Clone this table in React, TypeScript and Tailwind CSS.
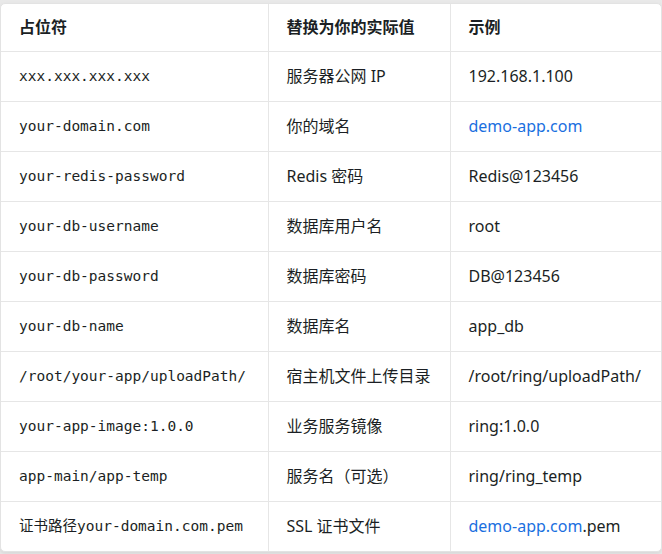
import React from "react";

type Row = {
  key: string;
  label: string;
  example: React.ReactNode;
};

const link = "text-[#1a6fe0]";

const rows: Row[] = [
  { key: "xxx.xxx.xxx.xxx", label: "服务器公网 IP", example: "192.168.1.100" },
  { key: "your-domain.com", label: "你的域名", example: <span className={link}>demo-app.com</span> },
  { key: "your-redis-password", label: "Redis 密码", example: "Redis@123456" },
  { key: "your-db-username", label: "数据库用户名", example: "root" },
  { key: "your-db-password", label: "数据库密码", example: "DB@123456" },
  { key: "your-db-name", label: "数据库名", example: "app_db" },
  { key: "/root/your-app/uploadPath/", label: "宿主机文件上传目录", example: "/root/ring/uploadPath/" },
  { key: "your-app-image:1.0.0", label: "业务服务镜像", example: "ring:1.0.0" },
  { key: "app-main/app-temp", label: "服务名（可选）", example: "ring/ring_temp" },
  {
    key: "证书路径your-domain.com.pem",
    label: "SSL 证书文件",
    example: (
      <>
        <span className={link}>demo-app.com</span>.pem
      </>
    ),
  },
];

const sans = "font-['Segoe_UI','Noto_Sans','Noto_Sans_CJK_SC',sans-serif]";
const mono = "font-['DejaVu_Sans_Mono','Noto_Sans_CJK_SC',monospace]";

export default function App() {
  return (
    <div className="min-h-screen bg-[#e9e9e9] pt-[3px] pb-[6px]">
      <div
        className={`w-[662px] overflow-hidden rounded-[5px] border border-[#e3e3e3] bg-white text-[16px] text-[#1b1f24] shadow-[0_2px_4px_rgba(0,0,0,0.08)] ${sans}`}
      >
        <table className="w-full border-collapse">
          <colgroup>
            <col className="w-[267px]" />
            <col className="w-[182px]" />
            <col />
          </colgroup>
          <thead>
            <tr className="h-[47px]">
              <th className="border-r border-[#e6e6e6] px-[18px] text-left font-bold">占位符</th>
              <th className="border-r border-[#e6e6e6] px-[18px] text-left font-bold">替换为你的实际值</th>
              <th className="px-[18px] text-left font-bold">示例</th>
            </tr>
          </thead>
          <tbody>
            {rows.map((row) => (
              <tr key={row.key} className="h-[50px] border-t border-[#e6e6e6]">
                <td className={`border-r border-[#e6e6e6] px-[18px] pt-px text-[14.5px] ${mono}`}>{row.key}</td>
                <td className="border-r border-[#e6e6e6] px-[18px]">{row.label}</td>
                <td className="px-[18px]">{row.example}</td>
              </tr>
            ))}
          </tbody>
        </table>
      </div>
    </div>
  );
}
